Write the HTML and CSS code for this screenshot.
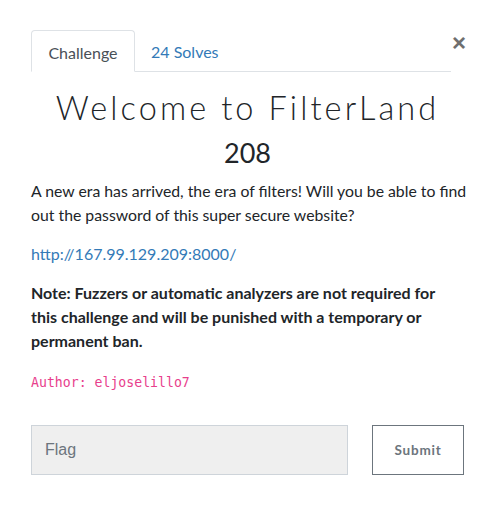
FILE: index.html
```html
<!DOCTYPE html>
<html>
<head>
<meta charset="utf-8">
<link rel="stylesheet" href="styles.css">
</head>
<body>
<div class="modal">
  <div class="head">
    <nav class="tabs">
      <span class="tab active">Challenge</span>
      <span class="tab link">24 Solves</span>
    </nav>
    <button class="close" aria-label="Close">&times;</button>
  </div>
  <h2 class="title">Welcome to FilterLand</h2>
  <h3 class="value">208</h3>
  <p class="desc">A new era has arrived, the era of filters! Will you be able to find out the password of this super secure website?</p>
  <p class="url"><a href="#">http://167.99.129.209:8000/</a></p>
  <p class="note">Note: Fuzzers or automatic analyzers are not required for this challenge and will be punished with a temporary or permanent ban.</p>
  <p class="author"><code>Author: eljoselillo7</code></p>
  <div class="form">
    <input class="flag" type="text" placeholder="Flag">
    <button class="submit">Submit</button>
  </div>
</div>
</body>
</html>
```
FILE: styles.css
```css
html, body {
  margin: 0;
  padding: 0;
  background: #fff;
}
body {
  font-family: Lato, "Noto Sans", sans-serif;
  color: #212529;
  font-size: 16px;
}
.modal {
  padding: 30px 0 0 31px;
  width: 445px;
}
.head {
  display: flex;
  align-items: flex-start;
}
.tabs {
  display: flex;
  width: 420px;
  border-bottom: 1px solid #dee2e6;
  height: 41px;
}
.tab {
  display: block;
  height: 41px;
  box-sizing: border-box;
  padding: 11px 16px 0;
  font-size: 16px;
  line-height: 22px;
}
.tab.active {
  width: 104px;
  border: 1px solid #dee2e6;
  border-bottom: 1px solid #fff;
  height: 42px;
  border-radius: 4px 4px 0 0;
  color: #495057;
  text-align: center;
  padding-left: 0;
  padding-right: 0;
}
.tab.link {
  color: #337ab7;
}
.close {
  border: 0;
  background: none;
  padding: 0;
  margin: 2px 0 0 1px;
  font-family: "Liberation Sans", sans-serif;
  font-size: 24px;
  font-weight: 700;
  line-height: 22px;
  color: #6f6f6f;
}
.title {
  margin: 17px 0 0;
  width: 433px;
  text-align: center;
  font-family: Lato, sans-serif;
  font-weight: 300;
  font-size: 32.5px;
  letter-spacing: 3.1px;
  line-height: 38px;
  color: #212529;
}
.value {
  margin: 10px 0 0;
  width: 433px;
  text-align: center;
  font-weight: 400;
  font-size: 27px;
  line-height: 32px;
}
.desc {
  margin: 10px 0 0;
  width: 445px;
  font-size: 15.8px;
  line-height: 23.5px;
}
.url {
  margin: 16px 0 0;
  line-height: 24px;
}
.url a {
  color: #337ab7;
  text-decoration: none;
}
.note {
  margin: 15px 0 0;
  font-weight: 700;
  line-height: 24px;
  width: 420px;
}
.author {
  margin: 16px 0 0;
  line-height: 24px;
}
.author code {
  font-family: "DejaVu Sans Mono", "Liberation Mono", monospace;
  font-size: 13.2px;
  color: #e83e8c;
}
.form {
  display: flex;
  gap: 24px;
  margin-top: 30px;
}
.flag {
  box-sizing: border-box;
  width: 317px;
  height: 50px;
  border: 1px solid #ced4da;
  background: #efefef;
  padding: 0 13px;
  font-family: "Liberation Sans", Arial, sans-serif;
  font-size: 16px;
  color: #495057;
}
.flag::placeholder {
  color: #6c757d;
}
.submit {
  box-sizing: border-box;
  width: 92px;
  height: 50px;
  border: 1px solid #6c757d;
  background: #fff;
  font-family: Lato, sans-serif;
  font-weight: 700;
  font-size: 13.5px;
  letter-spacing: 0.8px;
  color: #6c757d;
}
```
